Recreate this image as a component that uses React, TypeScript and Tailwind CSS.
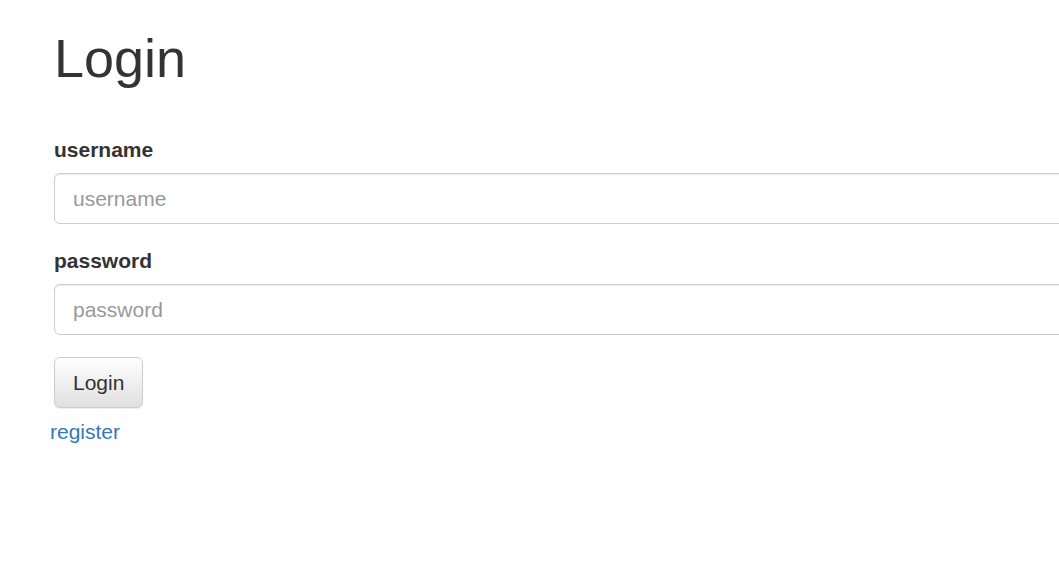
import React from "react";

export default function App() {
  return (
    <div
      className="min-h-[588px] w-full overflow-hidden bg-white text-[#333] text-[21px] leading-[1.42857]"
      style={{ fontFamily: '"Liberation Sans", Arial, sans-serif' }}
    >
      <div className="pl-[54px]">
        <h1 className="mt-[29px] mb-[16px] text-[54px] font-normal leading-[1.1]">Login</h1>
        <form className="pt-[31px]" onSubmit={(e) => e.preventDefault()}>
          <div className="mb-[22px]">
            <label className="mb-[8px] block font-bold">username</label>
            <input
              type="text"
              placeholder="username"
              className="block h-[51px] w-[1100px] rounded-[6px] border border-[#ccc] px-[18px] text-[21px] text-[#555] placeholder:text-[#999] shadow-[inset_0_1px_1px_rgba(0,0,0,0.075)] outline-none"
            />
          </div>
          <div className="mb-[22px]">
            <label className="mb-[8px] block font-bold">password</label>
            <input
              type="password"
              placeholder="password"
              className="block h-[51px] w-[1100px] rounded-[6px] border border-[#ccc] px-[18px] text-[21px] text-[#555] placeholder:text-[#999] shadow-[inset_0_1px_1px_rgba(0,0,0,0.075)] outline-none"
            />
          </div>
          <button
            type="submit"
            className="block h-[51px] rounded-[6px] border border-[#ccc] bg-gradient-to-b from-white to-[#e0e0e0] px-[18px] text-[21px] text-[#333] shadow-[inset_0_1px_0_rgba(255,255,255,0.15),0_1px_1px_rgba(0,0,0,0.075)]"
          >
            Login
          </button>
        </form>
        <a href="#" className="-ml-[4px] mt-[9px] block w-fit text-[#337ab7]">
          register
        </a>
      </div>
    </div>
  );
}
